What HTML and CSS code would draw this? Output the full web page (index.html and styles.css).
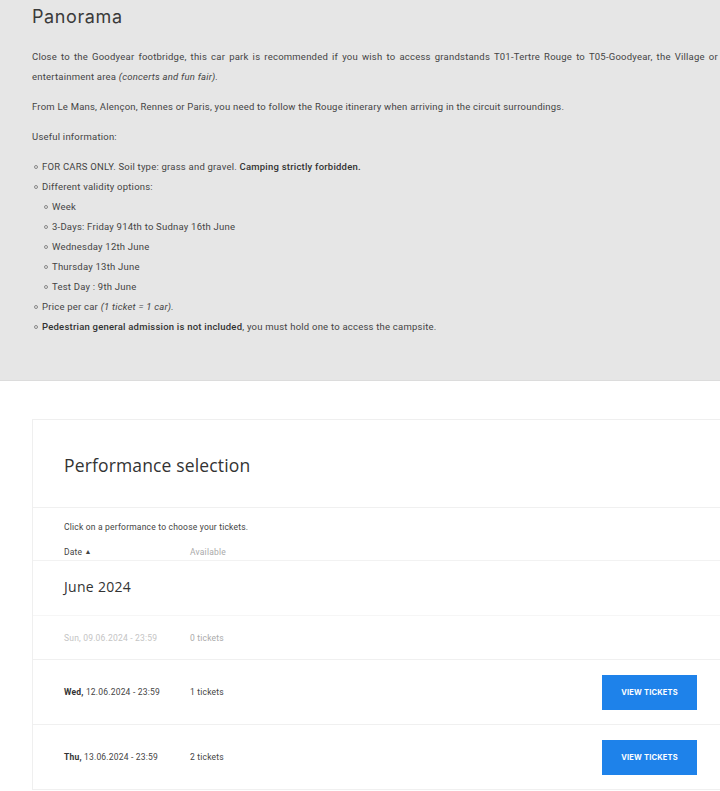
FILE: index.html
```html
<!DOCTYPE html>
<html lang="en">
<head>
<meta charset="utf-8">
<link rel="stylesheet" href="styles.css">
</head>
<body>
<section class="info">
  <div class="info-inner">
    <h1 class="info-title">Panorama</h1>
    <p class="just">Close to the Goodyear footbridge, this car park is recommended if you wish to access grandstands T01-Tertre Rouge to T05-Goodyear, the Village or the entertainment area <em>(concerts and fun fair).</em></p>
    <p>From Le Mans, Alençon, Rennes or Paris, you need to follow the Rouge itinerary when arriving in the circuit surroundings.</p>
    <p>Useful information:</p>
    <ul class="list">
      <li>FOR CARS ONLY. Soil type: grass and gravel. <strong>Camping strictly forbidden.</strong></li>
      <li>Different validity options:
        <ul class="list sub">
          <li>Week</li>
          <li>3-Days: Friday 914th to Sudnay 16th June</li>
          <li>Wednesday 12th June</li>
          <li>Thursday 13th June</li>
          <li>Test Day : 9th June</li>
        </ul>
      </li>
      <li>Price per car <em>(1 ticket = 1 car).</em></li>
      <li><strong>Pedestrian general admission is not included</strong>, you must hold one to access the campsite.</li>
    </ul>
  </div>
</section>

<section class="perf">
  <div class="card">
    <div class="card-head">
      <h2 class="card-title">Performance selection</h2>
    </div>
    <div class="card-intro">
      <p class="hint">Click on a performance to choose your tickets.</p>
      <div class="cols">
        <span class="col-date">Date <span class="tri">▲</span></span>
        <span class="col-avail">Available</span>
      </div>
    </div>
    <div class="month">June 2024</div>
    <div class="row disabled">
      <span class="r-date">Sun, 09.06.2024 - 23:59</span>
      <span class="r-avail">0 tickets</span>
    </div>
    <div class="row">
      <span class="r-date"><b>Wed,</b> 12.06.2024 - 23:59</span>
      <span class="r-avail">1 tickets</span>
      <button class="btn">VIEW TICKETS</button>
    </div>
    <div class="row">
      <span class="r-date"><b>Thu,</b> 13.06.2024 - 23:59</span>
      <span class="r-avail">2 tickets</span>
      <button class="btn">VIEW TICKETS</button>
    </div>
  </div>
</section>
</body>
</html>
```
FILE: styles.css
```css
html, body {
  margin: 0;
  padding: 0;
  overflow-x: hidden;
  background: #ffffff;
}
body {
  width: 720px;
  font-family: Roboto, "Liberation Sans", sans-serif;
  color: #444;
}
.info {
  background: #e6e6e6;
  border-bottom: 1px solid #dcdcdc;
  height: 381px;
  box-sizing: border-box;
  width: 720px;
  overflow: hidden;
}
.info-inner {
  width: 704px;
  padding: 5px 0 0 32px;
  font-size: 9.5px;
  letter-spacing: 0.22px;
  line-height: 20px;
}
.info-title {
  margin: 0 0 18px;
  font-family: Inter, sans-serif;
  font-size: 18px;
  font-weight: 400;
  letter-spacing: 0.6px;
  line-height: 24px;
  color: #3a3a3a;
}
.info-inner p {
  margin: 0 0 10px;
}
.just {
  text-align: justify;
}
.info-inner strong {
  font-weight: 500;
  color: #333;
}
.list {
  list-style: none;
  margin: 0;
  padding-left: 10px;
}
.list li {
  position: relative;
}
.list li::before {
  content: "";
  position: absolute;
  left: -8px;
  top: 8px;
  width: 2px;
  height: 2px;
  border: 1px solid #888;
  border-radius: 50%;
}
.sub {
  padding-left: 10px;
}
.perf {
  padding: 38px 0 0 32px;
}
.card {
  width: 697px;
  border: 1px solid #efefef;
  border-right: none;
  border-bottom: none;
  box-sizing: border-box;
}
.card-head {
  height: 87px;
  display: flex;
  align-items: center;
  padding-left: 31px;
  border-bottom: 1px solid #f0f0f0;
}
.card-title {
  margin: 0;
  font-family: "Open Sans", sans-serif;
  font-size: 17.5px;
  font-weight: 500;
  letter-spacing: 0.15px;
  color: #333;
  padding-top: 2px;
}
.card-intro {
  padding: 12px 0 0 31px;
  height: 40px;
  border-bottom: 1px solid #f2f2f2;
  font-size: 8.5px;
  letter-spacing: 0.2px;
}
.hint {
  margin: 0;
  line-height: 14px;
  color: #444;
}
.cols {
  display: flex;
  margin-top: 12px;
  line-height: 12px;
}
.col-date {
  width: 126px;
  color: #444;
}
.tri {
  font-size: 7px;
  vertical-align: 1px;
}
.col-avail {
  color: #aaa;
}
.month {
  height: 55px;
  box-sizing: border-box;
  padding: 16px 0 0 31px;
  font-family: "Open Sans", sans-serif;
  font-size: 14px;
  letter-spacing: 0.3px;
  color: #333;
  border-bottom: 1px solid #f6f6f6;
}
.row {
  display: flex;
  align-items: center;
  height: 64px;
  padding: 0 32px 0 31px;
  border-bottom: 1px solid #f0f0f0;
  font-size: 8.5px;
  letter-spacing: 0.2px;
  color: #444;
}
.row.disabled {
  height: 43px;
  color: #c4c4c4;
}
.row.disabled .r-avail {
  color: #aaa;
}
.r-date {
  width: 126px;
}
.r-date b {
  font-weight: 700;
  color: #333;
}
.r-avail {
  flex: 1;
}
.btn {
  width: 95px;
  height: 35px;
  background: #1e82ea;
  color: #fff;
  border: none;
  font-family: Inter, sans-serif;
  font-size: 7.5px;
  font-weight: 700;
  letter-spacing: 0.2px;
  padding: 0;
}
```
